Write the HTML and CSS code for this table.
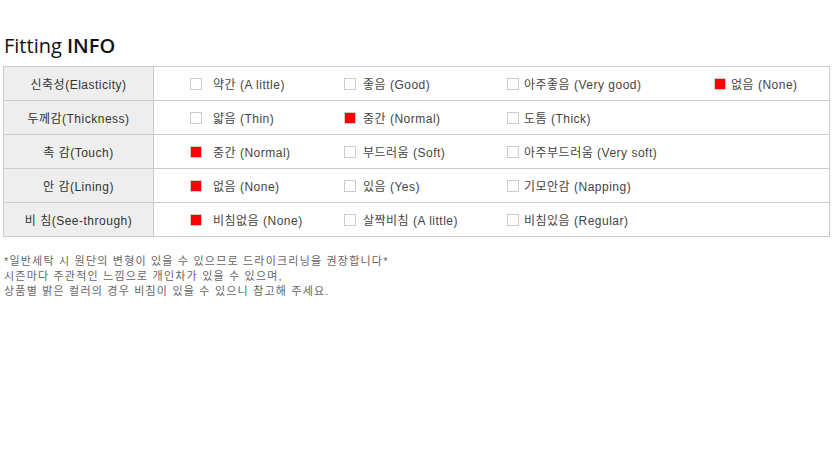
FILE: index.html
```html
<!DOCTYPE html>
<html lang="ko">
<head>
  <meta charset="UTF-8">
  <title>Fitting INFO</title>
  <link rel="stylesheet" href="styles.css">
</head>
<body>

<h2 class="fit-title">Fitting <b>INFO</b></h2>

<table class="fit-table">
  <tr>
    <th>신축성(Elasticity)</th>
    <td>
      <div class="opts">
        <span class="opt"><i class="chk"></i>약간 (A little)</span>
        <span class="opt"><i class="chk"></i>좋음 (Good)</span>
        <span class="opt"><i class="chk"></i>아주좋음 (Very good)</span>
        <span class="opt"><i class="chk on"></i>없음 (None)</span>
      </div>
    </td>
  </tr>
  <tr>
    <th>두께감(Thickness)</th>
    <td>
      <div class="opts">
        <span class="opt"><i class="chk"></i>얇음 (Thin)</span>
        <span class="opt"><i class="chk on"></i>중간 (Normal)</span>
        <span class="opt"><i class="chk"></i>도톰 (Thick)</span>
      </div>
    </td>
  </tr>
  <tr>
    <th>촉 감(Touch)</th>
    <td>
      <div class="opts">
        <span class="opt"><i class="chk on"></i>중간 (Normal)</span>
        <span class="opt"><i class="chk"></i>부드러움 (Soft)</span>
        <span class="opt"><i class="chk"></i>아주부드러움 (Very soft)</span>
      </div>
    </td>
  </tr>
  <tr>
    <th>안 감(Lining)</th>
    <td>
      <div class="opts">
        <span class="opt"><i class="chk on"></i>없음 (None)</span>
        <span class="opt"><i class="chk"></i>있음 (Yes)</span>
        <span class="opt"><i class="chk"></i>기모안감 (Napping)</span>
      </div>
    </td>
  </tr>
  <tr>
    <th>비 침(See-through)</th>
    <td>
      <div class="opts">
        <span class="opt"><i class="chk on"></i>비침없음 (None)</span>
        <span class="opt"><i class="chk"></i>살짝비침 (A little)</span>
        <span class="opt"><i class="chk"></i>비침있음 (Regular)</span>
      </div>
    </td>
  </tr>
</table>

<p class="fit-note">
  *일반세탁 시 원단의 변형이 있을 수 있으므로 드라이크리닝을 권장합니다*<br>
  시즌마다 주관적인 느낌으로 개인차가 있을 수 있으며,<br>
  상품별 밝은 컬러의 경우 비침이 있을 수 있으니 참고해 주세요.
</p>

</body>
</html>
```

FILE: styles.css
```css
body {
  margin: 0;
  padding: 0 3px;
  background: #fff;
  font-family: "Liberation Sans", "Noto Sans CJK KR", sans-serif;
  color: #444;
}
.fit-title {
  margin: 0;
  padding: 34px 0 8px 1px;
  font-family: "Open Sans", "Noto Sans CJK KR", sans-serif;
  font-size: 20px;
  font-weight: 400;
  line-height: 24px;
  color: #111;
}
.fit-title b {
  font-weight: 600;
}
.fit-table {
  width: 827px;
  border-collapse: collapse;
  font-size: 12px;
  letter-spacing: 0.5px;
}
.fit-table th,
.fit-table td {
  height: 33px;
  padding: 0;
  border: 1px solid #ccc;
}
.fit-table th {
  width: 149px;
  background: #eee;
  font-weight: 400;
  color: #333;
  text-align: center;
}
.opts {
  display: grid;
  grid-template-columns: 154px 163px 207px auto;
  padding-left: 36px;
}
.opt {
  display: flex;
  align-items: center;
  white-space: nowrap;
}
.chk {
  width: 10px;
  height: 10px;
  border: 1px solid #ccc;
  margin-right: 11px;
  flex: none;
}
.opt:nth-child(2) .chk {
  margin-right: 7px;
}
.opt:nth-child(3) .chk,
.opt:nth-child(4) .chk {
  margin-right: 5px;
}
.chk.on {
  background: #f00;
}
.fit-note {
  margin: 17px 0 0 1px;
  font-size: 11px;
  line-height: 15px;
  letter-spacing: 1.2px;
  color: #666;
}
```
